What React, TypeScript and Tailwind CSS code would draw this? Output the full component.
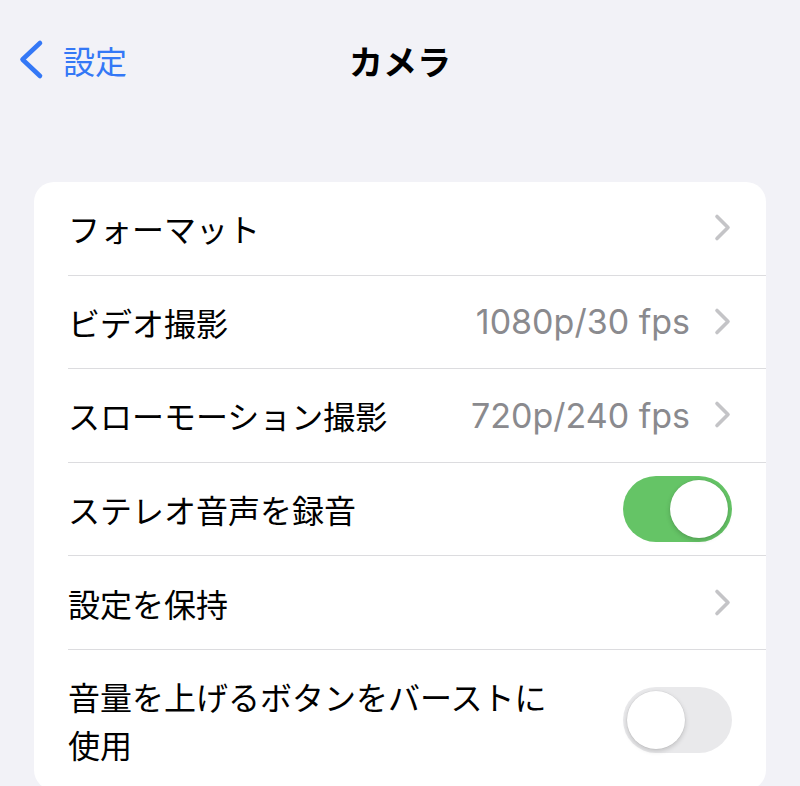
import React from "react";

const JP = '"Noto Sans CJK JP", "Noto Sans", sans-serif';
const LAT = 'Inter, "Noto Sans CJK JP", sans-serif';

function Chevron() {
  return (
    <svg width="20" height="30" viewBox="0 0 20 30" className="shrink-0">
      <path d="M5 3.5 L16 14.5 L5 25.5" fill="none" stroke="#c4c4c7" strokeWidth="3.6" strokeLinecap="round" strokeLinejoin="round" />
    </svg>
  );
}

function Toggle({ on }: { on: boolean }) {
  return (
    <div
      className={`w-[109px] h-[66px] rounded-full p-[4px] flex items-center shrink-0 ${
        on ? "bg-[#65c466] justify-end" : "bg-[#e9e9eb] justify-start"
      }`}
    >
      <div className="w-[58px] h-[58px] rounded-full bg-white shadow-[0_2px_5px_rgba(0,0,0,0.18),0_0_0_0.5px_rgba(0,0,0,0.06)]" />
    </div>
  );
}

function Row({
  label,
  value,
  right,
  last,
}: {
  label: string;
  value?: string;
  right: React.ReactNode;
  last?: boolean;
}) {
  return (
    <div className="pl-[34px]">
      <div
        className={`h-[93.6px] flex items-center justify-between pr-[34px] ${
          last ? "" : "border-b border-[#dcdcdf]"
        }`}
      >
        <span className="text-[32px] text-black" style={{ fontFamily: JP }}>
          {label}
        </span>
        <div className="flex items-center gap-[22px]">
          {value && (
            <span className="text-[34px] text-[#8a8a8e]" style={{ fontFamily: LAT }}>
              {value}
            </span>
          )}
          {right}
        </div>
      </div>
    </div>
  );
}

export default function App() {
  return (
    <div className="w-[800px] h-[786px] bg-[#f2f2f7] overflow-hidden">
      <div className="relative h-[120px] flex items-center justify-center">
        <div className="absolute left-0 top-0 h-[120px] flex items-center">
          <svg width="60" height="120" viewBox="0 0 60 120" className="shrink-0">
            <path d="M40 43 L22.5 59.5 L40 76" fill="none" stroke="#3478f6" strokeWidth="4.6" strokeLinecap="round" strokeLinejoin="round" />
          </svg>
          <span className="text-[32px] text-[#3478f6] ml-[3px]" style={{ fontFamily: JP }}>
            設定
          </span>
        </div>
        <span className="text-[34px] font-bold text-black" style={{ fontFamily: JP }}>
          カメラ
        </span>
      </div>
      <div className="mt-[62px] mx-[34px] bg-white rounded-[20px] overflow-hidden">
        <Row label="フォーマット" right={<Chevron />} />
        <Row label="ビデオ撮影" value="1080p/30 fps" right={<Chevron />} />
        <Row label="スローモーション撮影" value="720p/240 fps" right={<Chevron />} />
        <Row label="ステレオ音声を録音" right={<Toggle on />} />
        <Row label="設定を保持" right={<Chevron />} />
        <div className="pl-[34px]">
          <div className="h-[140px] flex items-center justify-between pr-[34px]">
            <span
              className="text-[32px] leading-[48px] text-black w-[490px]"
              style={{ fontFamily: JP }}
            >
              音量を上げるボタンをバーストに使用
            </span>
            <Toggle on={false} />
          </div>
        </div>
      </div>
    </div>
  );
}
